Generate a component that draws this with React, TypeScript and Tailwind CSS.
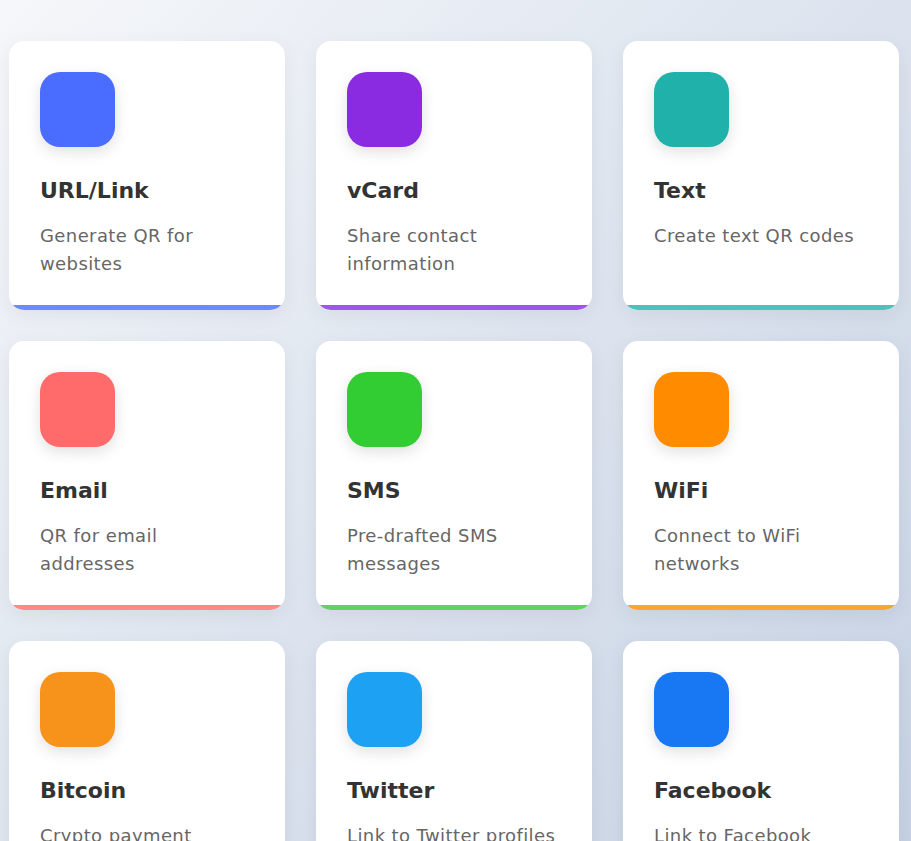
import React from 'react';

interface QrType {
    title: string;
    description: string;
    color: string;
    bar: string;
}

const types: QrType[] = [
    { title: 'URL/Link', description: 'Generate QR for websites', color: 'bg-[#4a6cff]', bar: 'bg-[#6e89ff]' },
    { title: 'vCard', description: 'Share contact information', color: 'bg-[#8a2be2]', bar: 'bg-[#a155e8]' },
    { title: 'Text', description: 'Create text QR codes', color: 'bg-[#20b2aa]', bar: 'bg-[#4dc1bb]' },
    { title: 'Email', description: 'QR for email addresses', color: 'bg-[#ff6b6b]', bar: 'bg-[#ff8989]' },
    { title: 'SMS', description: 'Pre-drafted SMS messages', color: 'bg-[#32cd32]', bar: 'bg-[#5bd75b]' },
    { title: 'WiFi', description: 'Connect to WiFi networks', color: 'bg-[#ff8c00]', bar: 'bg-[#ffa333]' },
    { title: 'Bitcoin', description: 'Crypto payment addresses', color: 'bg-[#f7931a]', bar: 'bg-[#f9a948]' },
    { title: 'Twitter', description: 'Link to Twitter profiles', color: 'bg-[#1da1f2]', bar: 'bg-[#4ab4f5]' },
    { title: 'Facebook', description: 'Link to Facebook pages', color: 'bg-[#1877f2]', bar: 'bg-[#4692f5]' },
];

const TypeCard: React.FC<{ item: QrType }> = ({ item }) => (
    <div className="relative overflow-hidden bg-white rounded-[15px] pt-[31px] px-[31px] pb-[32px] shadow-[0_5px_20px_rgba(0,0,0,0.06)]">
        <div className={`w-[75px] h-[75px] rounded-[20px] ${item.color} shadow-[0_5px_15px_rgba(0,0,0,0.12)] mb-[30px]`}></div>
        <h3 className="text-[22px] leading-[27px] font-bold text-[#333333] mb-[18px]">{item.title}</h3>
        <p className="text-[18px] leading-[28px] tracking-[0.4px] text-[#666666]">{item.description}</p>
        {/* Accent bar */}
        <div className={`absolute left-0 right-0 bottom-0 h-[5px] ${item.bar}`}></div>
    </div>
);

export default function App() {
    return (
        <div
            className="min-h-screen bg-gradient-to-br from-[#f5f7fa] to-[#c3cfe2] pt-[41px] pl-[9px] pb-[60px]"
            style={{ fontFamily: '"DejaVu Sans", "Noto Sans", sans-serif' }}
        >
            <div className="grid grid-cols-[276px_276px_276px] gap-[31px]">
                {types.map((t) => (
                    <TypeCard key={t.title} item={t} />
                ))}
            </div>
        </div>
    );
}
